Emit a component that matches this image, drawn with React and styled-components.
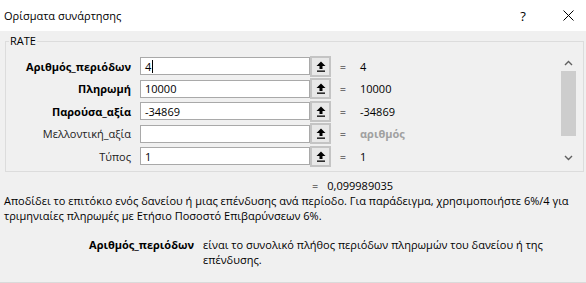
import React from 'react'
import styled, { createGlobalStyle } from 'styled-components'

const GlobalStyle = createGlobalStyle`
  body {
    margin: 0;
    font-family: "Open Sans", "Noto Sans", sans-serif;
    font-size: 11px;
    color: #000;
  }
`

const args = [
  { name: 'Αριθμός_περιόδων', value: '4', result: '4', required: true, caret: true },
  { name: 'Πληρωμή', value: '10000', result: '10000', required: true },
  { name: 'Παρούσα_αξία', value: '-34869', result: '-34869', required: true },
  { name: 'Μελλοντική_αξία', value: '', result: 'αριθμός', hint: true },
  { name: 'Τύπος', value: '1', result: '1' },
]

const RefIcon = () => (
  <svg width="10" height="11" viewBox="0 0 10 11">
    <path d="M5 0.5 L9.5 5 L6.5 5 L6.5 8 L3.5 8 L3.5 5 L0.5 5 Z" fill="#000" />
    <rect x="1" y="9.5" width="8" height="1.3" fill="#000" />
  </svg>
)

const Chevron = ({ down }) => (
  <svg width="9" height="6" viewBox="0 0 9 6">
    <path
      d={down ? 'M1 1 L4.5 4.5 L8 1' : 'M1 5 L4.5 1.5 L8 5'}
      stroke="#606060"
      strokeWidth="1.4"
      fill="none"
    />
  </svg>
)

export default function App() {
  return (
    <>
      <GlobalStyle />
      <Dialog>
        <TitleBar>
          <Title>Ορίσματα συνάρτησης</Title>
          <TitleButton>?</TitleButton>
          <CloseButton>
            <svg width="11" height="11" viewBox="0 0 11 11">
              <path d="M0.5 0.5 L10.5 10.5 M10.5 0.5 L0.5 10.5" stroke="#000" strokeWidth="1" />
            </svg>
          </CloseButton>
        </TitleBar>
        <Body>
          <GroupBox>
            <Legend>RATE</Legend>
            <ArgsArea>
              <ArgsGrid>
                {args.map((a) => (
                  <React.Fragment key={a.name}>
                    <ArgLabel $bold={a.required}>{a.name}</ArgLabel>
                    <InputWrap>
                      <TextBox>
                        {a.value}
                        {a.caret && <Caret />}
                      </TextBox>
                      <RefButton>
                        <RefIcon />
                      </RefButton>
                    </InputWrap>
                    <Equals>=</Equals>
                    <ArgValue $hint={a.hint}>{a.result}</ArgValue>
                  </React.Fragment>
                ))}
              </ArgsGrid>
              <ScrollBar>
                <ScrollArrow>
                  <Chevron />
                </ScrollArrow>
                <Track>
                  <Thumb />
                </Track>
                <ScrollArrow>
                  <Chevron down />
                </ScrollArrow>
              </ScrollBar>
            </ArgsArea>
          </GroupBox>
          <ResultRow>
            <Equals>=</Equals>
            <span>0,099989035</span>
          </ResultRow>
          <Description>
            Αποδίδει το επιτόκιο ενός δανείου ή μιας επένδυσης ανά περίοδο. Για παράδειγμα, χρησιμοποιήστε 6%/4 για
            τριμηνιαίες πληρωμές με Ετήσιο Ποσοστό Επιβαρύνσεων 6%.
          </Description>
          <HelpRow>
            <HelpName>Αριθμός_περιόδων</HelpName>
            <HelpText>είναι το συνολικό πλήθος περιόδων πληρωμών του δανείου ή της επένδυσης.</HelpText>
          </HelpRow>
        </Body>
      </Dialog>
    </>
  )
}

const Dialog = styled.div`
  width: 586px;
  height: 283px;
  overflow: hidden;
  background: #f0f0f0;
  display: flex;
  flex-direction: column;
  border-bottom: 1px solid #dadada;
  box-sizing: border-box;
`

const TitleBar = styled.div`
  height: 31px;
  background: #fff;
  display: flex;
  align-items: center;
  padding-left: 4px;
  flex-shrink: 0;
`

const Title = styled.div`
  flex: 1;
  font-size: 11px;
  padding-bottom: 1px;
`

const TitleButton = styled.div`
  width: 24px;
  text-align: center;
  font-size: 13px;
  margin-right: 21px;
`

const CloseButton = styled.div`
  width: 24px;
  display: flex;
  justify-content: center;
  margin-right: 6px;
`

const Body = styled.div`
  flex: 1;
  padding: 3px 2px 0 5px;
`

const GroupBox = styled.fieldset`
  margin: 0;
  padding: 6px 6px 5px 0;
  border: 1px solid #dcdcdc;
  min-width: 0;
`

const Legend = styled.legend`
  padding: 0 1px;
  margin-left: 3px;
  font-size: 11px;
  line-height: 14px;
`

const ArgsArea = styled.div`
  display: flex;
  align-items: flex-start;
`

const ArgsGrid = styled.div`
  flex: 1;
  display: grid;
  grid-template-columns: 134px 191px 22px 1fr;
  grid-auto-rows: 18px;
  row-gap: 4.5px;
  align-items: center;
  padding-top: 3px;
`

const ArgLabel = styled.div`
  text-align: right;
  padding-right: 9px;
  font-weight: ${(p) => (p.$bold ? 700 : 400)};
  white-space: nowrap;
  color: ${(p) => (p.$bold ? '#000' : '#222')};
`

const InputWrap = styled.div`
  display: flex;
  align-items: center;
  height: 18px;
`

const TextBox = styled.div`
  flex: 1;
  height: 18px;
  box-sizing: border-box;
  background: #fff;
  border: 1px solid #a9a9a9;
  padding: 0 4px;
  display: flex;
  align-items: center;
`

const Caret = styled.span`
  display: inline-block;
  width: 1px;
  height: 13px;
  background: #000;
  margin-left: 1px;
`

const RefButton = styled.div`
  width: 21px;
  height: 21px;
  box-sizing: border-box;
  border: 2px solid #c4c4c4;
  background: #e8e8e8;
  display: flex;
  align-items: center;
  justify-content: center;
`

const Equals = styled.span`
  text-align: center;
  margin-left: 2px;
`

const ArgValue = styled.div`
  padding-left: 7px;
  color: ${(p) => (p.$hint ? '#a0a0a0' : '#000')};
  font-weight: ${(p) => (p.$hint ? 700 : 400)};
`

const ScrollBar = styled.div`
  width: 17px;
  height: 112px;
  background: #f0f0f0;
  display: flex;
  flex-direction: column;
  margin-left: 10px;
`

const ScrollArrow = styled.div`
  height: 17px;
  display: flex;
  align-items: center;
  justify-content: center;
`

const Track = styled.div`
  flex: 1;
`

const Thumb = styled.div`
  height: 65px;
  background: #cdcdcd;
  margin: 0 1px;
`

const ResultRow = styled.div`
  display: flex;
  padding-left: 305px;
  margin-top: 6px;
  gap: 9px;
  line-height: 15px;
`

const Description = styled.div`
  line-height: 15px;
  margin-left: -1px;
`

const HelpRow = styled.div`
  display: grid;
  grid-template-columns: 198px 1fr;
  margin-top: 14px;
  line-height: 15px;
`

const HelpName = styled.div`
  font-weight: 700;
  text-align: right;
  padding-right: 9px;
`

const HelpText = styled.div`
  padding-right: 22px;
`
